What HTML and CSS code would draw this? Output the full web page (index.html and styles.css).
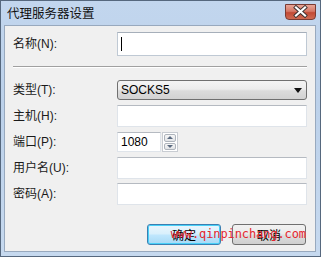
FILE: index.html
```html
<!DOCTYPE html>
<html>
<head>
<meta charset="utf-8">
<link rel="stylesheet" href="styles.css">
</head>
<body>
<div class="window">
  <div class="titlebar">
    <span class="title">代理服务器设置</span>
    <div class="close">
      <svg width="31" height="16" viewBox="0 0 31 16">
        <path d="M11 3.5 L20 11.5 M20 3.5 L11 11.5" stroke="#3a3030" stroke-width="4" stroke-linecap="square"/>
        <path d="M11 3.5 L20 11.5 M20 3.5 L11 11.5" stroke="#ffffff" stroke-width="2.2" stroke-linecap="square"/>
      </svg>
    </div>
  </div>
  <div class="client">
    <div class="row name-row">
      <label class="lbl">名称(N):</label>
      <div class="textbox tall"><span class="caret"></span></div>
    </div>
    <div class="sep"></div>
    <div class="fields">
      <div class="row">
        <label class="lbl">类型(T):</label>
        <div class="combo"><span class="combo-text">SOCKS5</span><span class="arrow"></span></div>
      </div>
      <div class="row">
        <label class="lbl">主机(H):</label>
        <div class="textbox"></div>
      </div>
      <div class="row">
        <label class="lbl">端口(P):</label>
        <div class="spin">
          <div class="textbox spin-box"><span class="val">1080</span></div>
          <div class="spin-btns">
            <div class="spin-btn"><span class="tri up"></span></div>
            <div class="spin-btn"><span class="tri down"></span></div>
          </div>
        </div>
      </div>
      <div class="row">
        <label class="lbl">用户名(U):</label>
        <div class="textbox"></div>
      </div>
      <div class="row">
        <label class="lbl">密码(A):</label>
        <div class="textbox"></div>
      </div>
    </div>
    <div class="buttons">
      <div class="btn default">确定</div>
      <div class="btn">取消</div>
      <span class="watermark">www.qinpinchang.com</span>
    </div>
  </div>
</div>
</body>
</html>
```
FILE: styles.css
```css
* { box-sizing: border-box; }
html, body { margin: 0; padding: 0; }
body {
  width: 321px;
  height: 257px;
  overflow: hidden;
  font-family: "Liberation Sans", "Noto Sans CJK SC", sans-serif;
  font-size: 12px;
  color: #000;
}
.window {
  width: 321px;
  height: 257px;
  border: 1px solid #56687e;
  background: linear-gradient(to bottom, #c2d6ee 0%, #bcd1ea 40%, #c6d9ef 100%);
  padding: 0 4px 4px 3px;
  display: flex;
  flex-direction: column;
}
.titlebar {
  height: 24px;
  display: flex;
  align-items: flex-start;
  justify-content: space-between;
  flex: none;
}
.title {
  padding-left: 3px;
  margin-top: 4px;
  font-family: "Noto Sans CJK SC", sans-serif;
  font-size: 12.5px;
  line-height: 16px;
  color: #111;
}
.close {
  width: 31px;
  height: 16px;
  margin-top: 3px;
  border: 1px solid #7a3b33;
  border-radius: 0 0 4px 4px;
  background: linear-gradient(to bottom, #e8a597 0%, #d67866 45%, #c24a35 55%, #cf6a52 100%);
  display: flex;
}
.close svg { display: block; margin: -1px; }
.client {
  flex: 1;
  background: #f0f0f0;
  border: 1px solid #98a9be;
  padding: 6px 8px 0 8px;
  display: flex;
  flex-direction: column;
}
.row {
  display: flex;
  align-items: center;
  height: 22px;
  margin-bottom: 4px;
}
.name-row { height: 24px; margin-bottom: 0; }
.lbl {
  width: 104px;
  flex: none;
  font-family: "Liberation Sans", "Noto Sans CJK SC", sans-serif;
  font-size: 12px;
  line-height: 14px;
  color: #1a1a1a;
}
.textbox {
  flex: 1;
  height: 22px;
  background: #fff;
  border: 1px solid #dfe4ea;
  border-top-color: #b5bac1;
  position: relative;
}
.textbox.tall { height: 24px; border-color: #bfc9d4; border-top-color: #a6afba; }
.caret {
  position: absolute;
  left: 3px;
  top: 4px;
  width: 1px;
  height: 14px;
  background: #000;
}
.sep {
  height: 2px;
  border-top: 1px solid #a0a0a0;
  border-bottom: 1px solid #ffffff;
  margin: 10px 0 11px 0;
}
.fields { display: flex; flex-direction: column; }
.combo {
  flex: 1;
  height: 20px;
  border: 1px solid #707070;
  border-radius: 3px;
  background: linear-gradient(to bottom, #f4f4f4 0%, #ececec 45%, #dcdcdc 55%, #d2d2d2 100%);
  display: flex;
  align-items: center;
  justify-content: space-between;
  padding: 0 4px 0 3px;
}
.combo-text { font-size: 12px; line-height: 14px; }
.arrow {
  width: 0;
  height: 0;
  border-left: 4px solid transparent;
  border-right: 4px solid transparent;
  border-top: 5px solid #111;
}
.spin {
  display: flex;
  align-items: center;
  gap: 1px;
  height: 20px;
}
.spin-box {
  flex: none;
  width: 44px;
  height: 20px;
  padding-left: 3px;
  display: flex;
  align-items: center;
}
.val { font-size: 12px; line-height: 14px; }
.spin-btns {
  display: flex;
  flex-direction: column;
  width: 16px;
  height: 20px;
  border: 1px solid #c8ccd2;
  background: #fff;
}
.spin-btn {
  flex: 1;
  margin: 1px 1px 0 1px;
  border: 1px solid #aeb4bc;
  border-radius: 2px;
  background: linear-gradient(to bottom, #f6f6f6, #e2e4e7);
  display: flex;
  align-items: center;
  justify-content: center;
}
.spin-btn + .spin-btn { margin-bottom: 1px; }
.tri { width: 0; height: 0; border-left: 3px solid transparent; border-right: 3px solid transparent; }
.tri.up { border-bottom: 3px solid #5a6a80; }
.tri.down { border-top: 3px solid #5a6a80; }
.buttons {
  position: relative;
  display: flex;
  justify-content: flex-end;
  gap: 11px;
  margin-top: 15px;
  padding-right: 1px;
}
.btn {
  width: 74px;
  height: 21px;
  border: 1px solid #707070;
  border-radius: 3px;
  background: linear-gradient(to bottom, #f2f2f2 0%, #ebebeb 45%, #dddddd 55%, #cfcfcf 100%);
  display: flex;
  align-items: center;
  justify-content: center;
  font-family: "Noto Sans CJK SC", sans-serif;
  font-size: 12px;
  line-height: 14px;
}
.btn.default {
  border-color: #3c7fb1;
  box-shadow: inset 0 0 0 1px #48d0f8;
  background: linear-gradient(to bottom, #eaf6fd 0%, #d9f0fc 45%, #bee6fd 55%, #a7d9f5 100%);
}
.watermark {
  position: absolute;
  right: 1px;
  top: 3px;
  font-family: "DejaVu Sans Mono", monospace;
  font-size: 12px;
  line-height: 14px;
  color: #e5262f;
  letter-spacing: -0.1px;
}
```
